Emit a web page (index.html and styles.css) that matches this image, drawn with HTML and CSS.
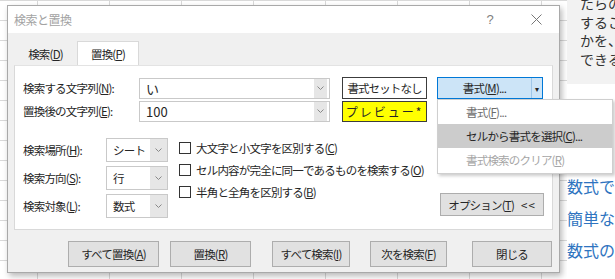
FILE: index.html
```html
<!DOCTYPE html>
<html lang="ja">
  <head>
    <meta charset="UTF-8" />
    <meta name="viewport" content="width=device-width, initial-scale=1.0" />
    <title>検索と置換</title>

    <link rel="stylesheet" href="styles.css">
  </head>
  <body>
    <div class="screen">
      <div class="dialog">
        <div class="titlebar">
          <span class="title">検索と置換</span>
          <span class="help_btn">?</span>
          <svg class="close_btn" width="11" height="11" viewBox="0 0 11 11">
            <path d="M0.5 0.5 L10.5 10.5 M10.5 0.5 L0.5 10.5" stroke="#777" stroke-width="1" fill="none" />
          </svg>
        </div>
        <div class="body">
          <div class="tabs">
            <div class="tab">検索(<u>D</u>)</div>
            <div class="tab tab_on">置換(<u>P</u>)</div>
          </div>
          <div class="panel">
            <div class="row">
              <span class="label">検索する文字列(<u>N</u>):</span>
              <div class="combo">
                <span class="combo_text">い</span>
                <span class="combo_arrow">
                  <svg width="7" height="4" viewBox="0 0 7 4"><path d="M0.5 0.5 L3.5 3.5 L6.5 0.5" stroke="#888" fill="none" /></svg>
                </span>
              </div>
              <div class="fmt_box">書式セットなし</div>
              <div class="fmt_btn">
                <span class="fmt_main">書式(<u>M</u>)...</span>
                <span class="fmt_split">▾</span>
              </div>
            </div>
            <div class="row row_2">
              <span class="label">置換後の文字列(<u>E</u>):</span>
              <div class="combo">
                <span class="combo_text">100</span>
                <span class="combo_arrow">
                  <svg width="7" height="4" viewBox="0 0 7 4"><path d="M0.5 0.5 L3.5 3.5 L6.5 0.5" stroke="#888" fill="none" /></svg>
                </span>
              </div>
              <div class="fmt_box preview">プレビュー*</div>
            </div>

            <div class="options">
              <div class="selects">
                <div class="sel_row">
                  <span class="sel_label">検索場所(<u>H</u>):</span>
                  <div class="select">
                    <span class="select_text">シート</span>
                    <span class="select_arrow">
                      <svg width="7" height="4" viewBox="0 0 7 4"><path d="M0.5 0.5 L3.5 3.5 L6.5 0.5" stroke="#888" fill="none" /></svg>
                    </span>
                  </div>
                </div>
                <div class="sel_row">
                  <span class="sel_label">検索方向(<u>S</u>):</span>
                  <div class="select">
                    <span class="select_text">行</span>
                    <span class="select_arrow">
                      <svg width="7" height="4" viewBox="0 0 7 4"><path d="M0.5 0.5 L3.5 3.5 L6.5 0.5" stroke="#888" fill="none" /></svg>
                    </span>
                  </div>
                </div>
                <div class="sel_row">
                  <span class="sel_label">検索対象(<u>L</u>):</span>
                  <div class="select">
                    <span class="select_text">数式</span>
                    <span class="select_arrow">
                      <svg width="7" height="4" viewBox="0 0 7 4"><path d="M0.5 0.5 L3.5 3.5 L6.5 0.5" stroke="#888" fill="none" /></svg>
                    </span>
                  </div>
                </div>
              </div>
              <div class="checks">
                <div class="check"><span class="box"></span>大文字と小文字を区別する(<u>C</u>)</div>
                <div class="check"><span class="box"></span>セル内容が完全に同一であるものを検索する(<u>O</u>)</div>
                <div class="check"><span class="box"></span>半角と全角を区別する(<u>B</u>)</div>
              </div>
              <div class="opt_side">
                <button class="btn btn_opt">オプション(<u>T</u>)<span class="opt_arrows">&lt;&lt;</span></button>
              </div>
            </div>
          </div>

          <div class="footer">
            <button class="btn btn_replace_all">すべて置換(<u>A</u>)</button>
            <button class="btn btn_replace">置換(<u>R</u>)</button>
            <button class="btn btn_find_all">すべて検索(<u>I</u>)</button>
            <button class="btn btn_find_next">次を検索(<u>F</u>)</button>
            <button class="btn btn_close">閉じる</button>
          </div>
        </div>
      </div>

      <aside class="side">
        <div class="side_note">
          <p>たらの</p>
          <p>するこ</p>
          <p>かを、</p>
          <p>できる</p>
        </div>
        <div class="side_links">
          <a class="link">数式で名</a>
          <a class="link">簡単な数</a>
          <a class="link">数式の表</a>
        </div>
      </aside>
    </div>

    <div class="menu">
      <div class="menu_item item_dim">書式(<u>F</u>)...</div>
      <div class="menu_item item_hover">セルから書式を選択(<u>C</u>)...</div>
      <div class="menu_item item_off">書式検索のクリア(<u>R</u>)</div>
    </div>
  </body>
</html>
```

FILE: styles.css
```css
body {
  margin: 0;
  width: 615px;
  height: 279px;
  overflow: hidden;
  position: relative;
  font-family: "Noto Sans CJK JP", sans-serif;
  font-size: 11.5px;
  letter-spacing: -0.8px;
  color: #262626;
  background-color: #fff;
  background-image: linear-gradient(to right, #d9d9d9 1px, transparent 1px),
    linear-gradient(to bottom, #d9d9d9 1px, transparent 1px);
  background-size: 72px 100%, 100% 20px;
  background-position: 37px 0, 0 0;
}
u {
  text-decoration: underline;
  text-underline-offset: 1px;
}
.screen {
  display: flex;
  height: 279px;
  padding-left: 7px;
}
.dialog {
  margin-top: 5px;
  width: 553px;
  height: 268px;
  flex-shrink: 0;
  box-sizing: border-box;
  border: 1px solid #a9a9a9;
  background-color: #f0f0f0;
  box-shadow: 2px 3px 6px rgba(0, 0, 0, 0.28);
  display: flex;
  flex-direction: column;
}
.titlebar {
  height: 27px;
  background-color: #fff;
  display: flex;
  align-items: center;
  padding-left: 6px;
}
.title {
  flex: 1;
  font-size: 12px;
  letter-spacing: -0.5px;
  color: #a3a3a3;
}
.help_btn {
  color: #808080;
  font-family: "Liberation Sans", sans-serif;
  font-size: 13px;
  margin-right: 38px;
}
.close_btn {
  margin-right: 17px;
}
.body {
  flex: 1;
  padding: 8px 6px 0;
}
.tabs {
  display: flex;
  align-items: flex-end;
  height: 24px;
}
.tab {
  width: 63px;
  height: 22px;
  display: flex;
  align-items: center;
  justify-content: center;
}
.tab_on {
  width: 62px;
  height: 24px;
  box-sizing: border-box;
  background-color: #fff;
  border: 1px solid #d9d9d9;
  border-bottom: none;
}
.panel {
  height: 165px;
  box-sizing: border-box;
  background-color: #fff;
  border: 1px solid #d9d9d9;
  border-top-color: #e3e3e3;
  padding: 11px 8px 0;
}
.row {
  display: flex;
  align-items: center;
  height: 22px;
}
.row_2 {
  margin-top: 1px;
}
.label {
  width: 116px;
}
.combo {
  width: 191px;
  height: 21px;
  box-sizing: border-box;
  border: 1px solid #c9c9c9;
  display: flex;
  align-items: center;
}
.combo_text {
  flex: 1;
  padding-left: 6px;
  font-size: 13px;
  letter-spacing: 0;
}
.combo_arrow {
  width: 13px;
  height: 19px;
  margin-right: 2px;
  background-color: #e6e6e6;
  display: flex;
  align-items: center;
  justify-content: center;
}
.fmt_box {
  margin-left: 12px;
  width: 85px;
  height: 22px;
  box-sizing: border-box;
  border: 1px solid #3c3c3c;
  background-color: #fff;
  display: flex;
  align-items: center;
  justify-content: center;
  white-space: nowrap;
  font-size: 11.5px;
  letter-spacing: -0.9px;
}
.preview {
  height: 21px;
  background-color: #ffff00;
  font-size: 12px;
  letter-spacing: 2px;
}
.fmt_btn {
  margin-left: 10px;
  width: 106px;
  height: 22px;
  box-sizing: border-box;
  border: 1px solid #0078d7;
  background-color: #cce4f7;
  display: flex;
  align-items: center;
}
.fmt_main {
  flex: 1;
  text-align: center;
}
.fmt_split {
  width: 10px;
  height: 20px;
  border-left: 1px solid #9ec6e8;
  font-size: 8px;
  display: flex;
  align-items: center;
  justify-content: center;
}
.options {
  display: flex;
  margin-top: 15px;
}
.selects {
  width: 145px;
  padding-top: 1px;
  display: flex;
  flex-direction: column;
  gap: 4px;
}
.sel_row {
  display: flex;
  align-items: center;
  height: 24px;
}
.sel_label {
  width: 83px;
}
.select {
  width: 62px;
  height: 24px;
  box-sizing: border-box;
  border: 1px solid #c9c9c9;
  display: flex;
  align-items: center;
}
.select_text {
  flex: 1;
  padding-left: 6px;
}
.select_arrow {
  width: 17px;
  height: 22px;
  background-color: #e6e6e6;
  display: flex;
  align-items: center;
  justify-content: center;
}
.checks {
  flex: 1;
  margin-left: 11px;
  display: flex;
  flex-direction: column;
}
.check {
  height: 22px;
  display: flex;
  align-items: center;
  white-space: nowrap;
}
.box {
  width: 10px;
  height: 10px;
  border: 1px solid #333;
  background-color: #fff;
  margin-right: 5px;
}
.opt_side {
  display: flex;
  align-items: flex-end;
  padding-bottom: 2px;
}
.btn {
  height: 26px;
  padding: 0;
  font: inherit;
  letter-spacing: inherit;
  white-space: nowrap;
  color: #262626;
  background-color: #e1e1e1;
  border: 1px solid #adadad;
}
.btn_opt {
  width: 104px;
  height: 23px;
}
.opt_arrows {
  margin-left: 7px;
  letter-spacing: 1px;
}
.footer {
  margin-top: 11px;
  display: flex;
  justify-content: flex-end;
  padding-right: 1px;
}
.btn_replace_all {
  width: 91px;
}
.btn_replace {
  width: 81px;
  margin-left: 11px;
}
.btn_find_all {
  width: 78px;
  margin-left: 21px;
}
.btn_find_next {
  width: 77px;
  margin-left: 20px;
}
.btn_close {
  width: 80px;
  margin-left: 25px;
}
.side {
  margin-left: 7px;
  flex: 1;
  overflow: hidden;
  background-color: #fff;
  letter-spacing: 0;
}
.side_note {
  height: 90px;
  box-sizing: border-box;
  background-color: #f2f2f2;
  padding-left: 13px;
  font-size: 14px;
  line-height: 18.5px;
  color: #333;
  white-space: nowrap;
}
.side_note p {
  margin: 0;
}
.side_note p:first-child {
  margin-top: -6px;
}
.side_links {
  margin-top: 92px;
  display: flex;
  flex-direction: column;
  gap: 12px;
}
.link {
  font-size: 16px;
  line-height: 20px;
  color: #2e74c0;
  white-space: nowrap;
}
.menu {
  position: absolute;
  left: 437px;
  top: 99px;
  width: 176px;
  box-sizing: border-box;
  background-color: #fff;
  border: 1px solid #cfcfcf;
  box-shadow: 2px 2px 3px rgba(0, 0, 0, 0.2);
  padding: 0 0 1px;
}
.menu_item {
  height: 24px;
  padding-left: 28px;
  display: flex;
  align-items: center;
}
.item_dim {
  color: #6d6d6d;
}
.item_hover {
  background-color: #cccccc;
  color: #262626;
}
.item_off {
  color: #a6a6a6;
}
```
